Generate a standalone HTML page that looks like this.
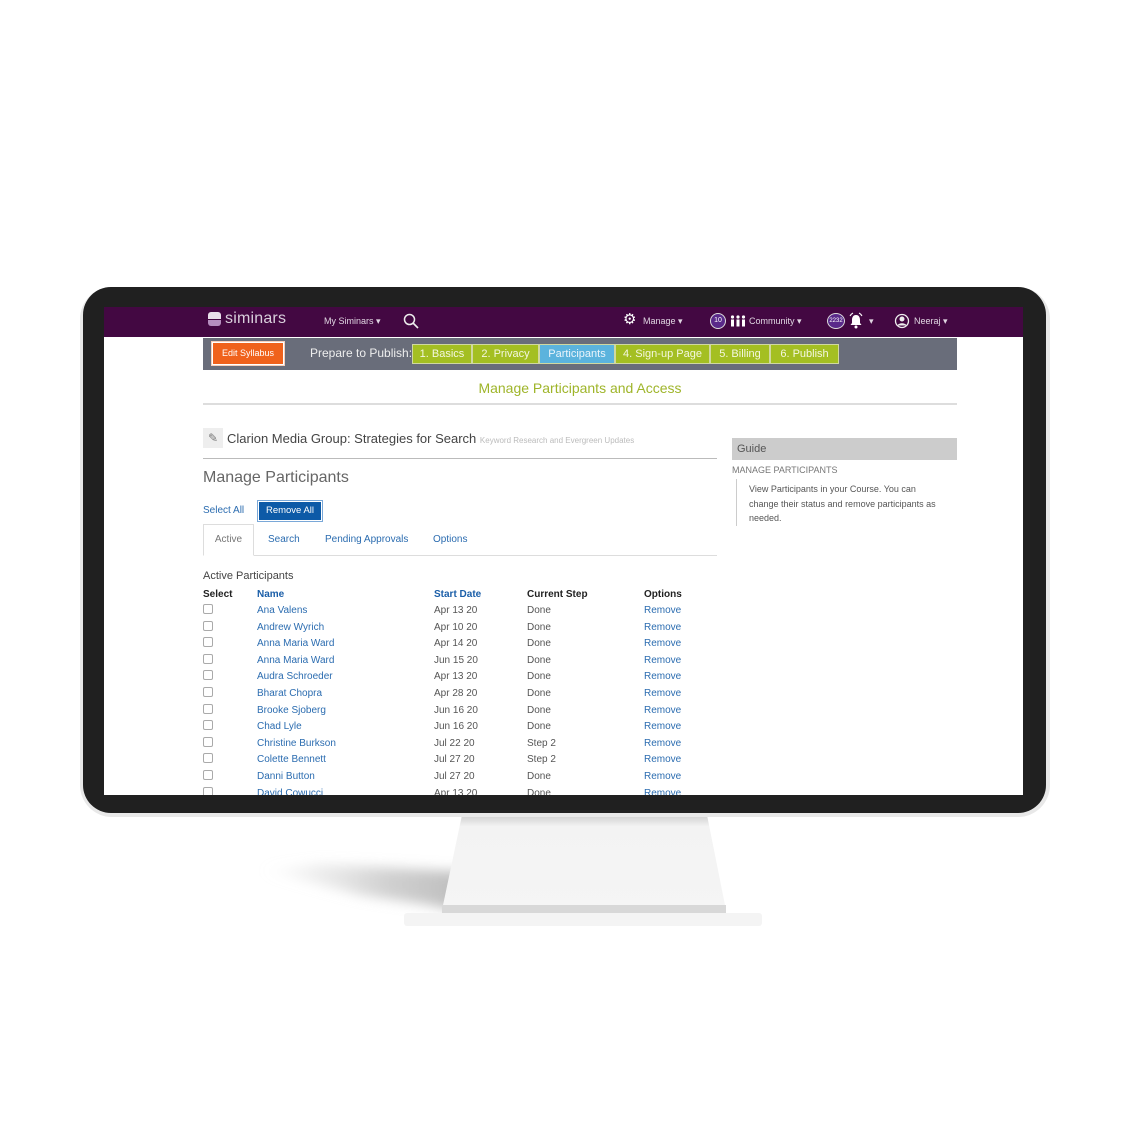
<!DOCTYPE html>
<html><head><meta charset="utf-8"><style>
*{margin:0;padding:0;box-sizing:border-box}
body{width:1123px;height:1122px;background:#fff;position:relative;overflow:hidden;font-family:"Liberation Sans",sans-serif;font-size:10px;color:#555}
.a{position:absolute;white-space:nowrap}
.bl{color:#2b6cb0}
.step{position:absolute;top:344px;height:20px;line-height:19px;color:#f4f7e0;font-size:11px;text-align:center;background:#a4bf22;border:1px solid #d0d8a0}
.cb{position:absolute;width:10px;height:10px;border:1px solid #aaa;border-radius:2px}
</style></head><body>
<!-- stand shadow -->
<svg class="a" style="left:0;top:0" width="1123" height="1122">
<defs>
<filter id="b" x="-50%" y="-50%" width="200%" height="200%"><feGaussianBlur stdDeviation="6"/></filter>
<linearGradient id="sg" x1="0" y1="0" x2="1" y2="0"><stop offset="0" stop-color="#ddd" stop-opacity="0"/><stop offset=".6" stop-color="#ccc" stop-opacity=".9"/><stop offset="1" stop-color="#bbb"/></linearGradient>
<linearGradient id="g" x1="0" y1="0" x2="0" y2="1"><stop offset="0" stop-color="#cfcfcf"/><stop offset=".12" stop-color="#f3f3f3"/><stop offset="1" stop-color="#f5f5f5"/></linearGradient>
</defs>
<polygon points="260,870 320,864 470,872 462,912 430,905 360,895" fill="url(#sg)" filter="url(#b)"/>
<polygon points="462,815 707,815 726,910 442,910" fill="url(#g)"/>
<rect x="442" y="905" width="284" height="8" fill="#d8d8d8"/>
<rect x="404" y="913" width="358" height="13" rx="3" fill="#f4f4f4"/>
</svg>
<!-- bezel -->
<div class="a" style="left:80px;top:287px;width:970px;height:530px;border-radius:32px;background:#e8e8e8"></div>
<div class="a" style="left:83px;top:287px;width:963px;height:526px;border-radius:28px;background:#202020"></div>
<div class="a" style="left:104px;top:307px;width:919px;height:488px;background:#fff;overflow:hidden">
 <div class="a" style="left:0;top:0;width:919px;height:30px;background:#430842"></div>
</div>
<!-- nav content -->
<div class="a" style="left:208px;top:312px;width:13px;height:7px;background:#e8e0ea;border-radius:3px 3px 0 0"></div>
<div class="a" style="left:208px;top:320px;width:13px;height:6px;background:#b58fbf;border-radius:0 0 3px 3px"></div>
<div class="a" style="left:225px;top:310px;font-size:16px;color:#d9cfdc;letter-spacing:.2px">siminars</div>
<div class="a" style="left:324px;top:316px;font-size:9px;color:#e0d6e2">My Siminars ▾</div>
<svg class="a" style="left:403px;top:313px" width="16" height="16"><circle cx="6.5" cy="6.5" r="5" stroke="#eee" stroke-width="1.5" fill="none"/><line x1="10" y1="10" x2="15" y2="15" stroke="#eee" stroke-width="1.6"/></svg>
<div class="a" style="left:623px;top:312px;font-size:15px;color:#fff;line-height:16px">⚙</div>
<div class="a" style="left:643px;top:316px;font-size:9px;color:#e0d6e2">Manage ▾</div>
<div class="a" style="left:710px;top:313px;width:16px;height:16px;border-radius:50%;border:1px solid #ddd;background:#5a2a8a;color:#fff;font-size:7px;text-align:center;line-height:14px">10</div>
<svg class="a" style="left:730px;top:315px" width="16" height="12"><g fill="#fff"><circle cx="2.5" cy="2" r="1.6"/><circle cx="8" cy="2" r="1.6"/><circle cx="13.5" cy="2" r="1.6"/><rect x="1" y="4.5" width="3" height="7"/><rect x="6.5" y="4.5" width="3" height="7"/><rect x="12" y="4.5" width="3" height="7"/></g></svg>
<div class="a" style="left:749px;top:316px;font-size:9px;color:#e0d6e2">Community ▾</div>
<div class="a" style="left:827px;top:313px;width:18px;height:16px;border-radius:50%;border:1px solid #ddd;background:#5a2a8a;color:#fff;font-size:6px;text-align:center;line-height:14px">2232</div>
<svg class="a" style="left:848px;top:312px" width="16" height="17"><path d="M8 3c-3 0-4 2.5-4 5v3l-1.5 2h11L12 11V8c0-2.5-1-5-4-5z" fill="#fff"/><circle cx="8" cy="15" r="1.5" fill="#fff"/><path d="M2 4a7 7 0 0 1 3-3M14 4a7 7 0 0 0-3-3" stroke="#fff" fill="none"/></svg>
<div class="a" style="left:869px;top:316px;font-size:9px;color:#e0d6e2">▾</div>
<svg class="a" style="left:894px;top:313px" width="16" height="16"><circle cx="8" cy="8" r="6.5" stroke="#eee" stroke-width="1.3" fill="none"/><circle cx="8" cy="6" r="2.5" fill="#eee"/><path d="M3.5 12.5c1-3 8-3 9 0" fill="#eee"/></svg>
<div class="a" style="left:914px;top:316px;font-size:9px;color:#e0d6e2">Neeraj ▾</div>
<!-- grey bar -->
<div class="a" style="left:203px;top:338px;width:754px;height:32px;background:#696d7a"></div>
<div class="a" style="left:211px;top:341px;width:74px;height:25px;border:1px solid #f5d0bc;background:#fff;padding:1px"><div style="background:#f0621c;color:#fff;font-size:9px;text-align:center;line-height:21px">Edit Syllabus</div></div>
<div class="a" style="left:310px;top:346px;font-size:12px;color:#eee">Prepare to Publish:</div>
<div class="step" style="left:412px;width:60px">1. Basics</div>
<div class="step" style="left:472px;width:67px">2. Privacy</div>
<div class="step" style="left:539px;width:76px;background:#5bb3dd;color:#eaf4fb">Participants</div>
<div class="step" style="left:615px;width:95px">4. Sign-up Page</div>
<div class="step" style="left:710px;width:60px">5. Billing</div>
<div class="step" style="left:770px;width:69px">6. Publish</div>
<div class="a" style="left:203px;top:380px;width:754px;text-align:center;font-size:14px;color:#9fb52a">Manage Participants and Access</div>
<div class="a" style="left:203px;top:403px;width:754px;height:2px;background:#ddd"></div>
<!-- course title -->
<div class="a" style="left:203px;top:428px;width:20px;height:20px;background:#eee;color:#777;font-size:12px;text-align:center;line-height:20px">✎</div>
<div class="a" style="left:227px;top:431px;font-size:13px;color:#444">Clarion Media Group: Strategies for Search <span style="font-size:8px;color:#bbb">Keyword Research and Evergreen Updates</span></div>
<div class="a" style="left:203px;top:458px;width:514px;height:1px;background:#bbb"></div>
<div class="a" style="left:203px;top:469px;font-size:16px;color:#666">Manage Participants</div>
<div class="a bl" style="left:203px;top:505px">Select All</div>
<div class="a" style="left:257px;top:500px;width:66px;height:22px;border:1px solid #7aa8d8;padding:1px"><div style="background:#0d5aa7;color:#fff;font-size:9.5px;text-align:center;line-height:18px">Remove All</div></div>
<!-- tabs -->
<div class="a" style="left:203px;top:555px;width:514px;height:1px;background:#ddd"></div>
<div class="a" style="left:203px;top:524px;width:51px;height:32px;border:1px solid #ddd;border-bottom:1px solid #fff;background:#fff;text-align:center;line-height:30px;color:#777">Active</div>
<div class="a bl" style="left:268px;top:534px">Search</div>
<div class="a bl" style="left:325px;top:534px">Pending Approvals</div>
<div class="a bl" style="left:433px;top:534px">Options</div>
<div class="a" style="left:203px;top:570px;font-size:11px;color:#444">Active Participants</div>
<div class="a" style="left:203px;top:589px;font-weight:bold;color:#222">Select</div>
<div class="a" style="left:257px;top:589px;font-weight:bold;color:#1a5ea8">Name</div>
<div class="a" style="left:434px;top:589px;font-weight:bold;color:#1a5ea8">Start Date</div>
<div class="a" style="left:527px;top:589px;font-weight:bold;color:#222">Current Step</div>
<div class="a" style="left:644px;top:589px;font-weight:bold;color:#222">Options</div>
<div class="a" style="left:200px;top:600px;width:600px;height:195px;overflow:hidden">
<div class="cb" style="left:3px;top:4px"></div><div class="a bl" style="left:57px;top:5px">Ana Valens</div><div class="a" style="left:234px;top:5px">Apr 13 20</div><div class="a" style="left:327px;top:5px">Done</div><div class="a bl" style="left:444px;top:5px">Remove</div>
<div class="cb" style="left:3px;top:20.6px"></div><div class="a bl" style="left:57px;top:21.6px">Andrew Wyrich</div><div class="a" style="left:234px;top:21.6px">Apr 10 20</div><div class="a" style="left:327px;top:21.6px">Done</div><div class="a bl" style="left:444px;top:21.6px">Remove</div>
<div class="cb" style="left:3px;top:37.2px"></div><div class="a bl" style="left:57px;top:38.2px">Anna Maria Ward</div><div class="a" style="left:234px;top:38.2px">Apr 14 20</div><div class="a" style="left:327px;top:38.2px">Done</div><div class="a bl" style="left:444px;top:38.2px">Remove</div>
<div class="cb" style="left:3px;top:53.8px"></div><div class="a bl" style="left:57px;top:54.8px">Anna Maria Ward</div><div class="a" style="left:234px;top:54.8px">Jun 15 20</div><div class="a" style="left:327px;top:54.8px">Done</div><div class="a bl" style="left:444px;top:54.8px">Remove</div>
<div class="cb" style="left:3px;top:70.4px"></div><div class="a bl" style="left:57px;top:71.4px">Audra Schroeder</div><div class="a" style="left:234px;top:71.4px">Apr 13 20</div><div class="a" style="left:327px;top:71.4px">Done</div><div class="a bl" style="left:444px;top:71.4px">Remove</div>
<div class="cb" style="left:3px;top:87px"></div><div class="a bl" style="left:57px;top:88px">Bharat Chopra</div><div class="a" style="left:234px;top:88px">Apr 28 20</div><div class="a" style="left:327px;top:88px">Done</div><div class="a bl" style="left:444px;top:88px">Remove</div>
<div class="cb" style="left:3px;top:103.6px"></div><div class="a bl" style="left:57px;top:104.6px">Brooke Sjoberg</div><div class="a" style="left:234px;top:104.6px">Jun 16 20</div><div class="a" style="left:327px;top:104.6px">Done</div><div class="a bl" style="left:444px;top:104.6px">Remove</div>
<div class="cb" style="left:3px;top:120.2px"></div><div class="a bl" style="left:57px;top:121.2px">Chad Lyle</div><div class="a" style="left:234px;top:121.2px">Jun 16 20</div><div class="a" style="left:327px;top:121.2px">Done</div><div class="a bl" style="left:444px;top:121.2px">Remove</div>
<div class="cb" style="left:3px;top:136.8px"></div><div class="a bl" style="left:57px;top:137.8px">Christine Burkson</div><div class="a" style="left:234px;top:137.8px">Jul 22 20</div><div class="a" style="left:327px;top:137.8px">Step 2</div><div class="a bl" style="left:444px;top:137.8px">Remove</div>
<div class="cb" style="left:3px;top:153.4px"></div><div class="a bl" style="left:57px;top:154.4px">Colette Bennett</div><div class="a" style="left:234px;top:154.4px">Jul 27 20</div><div class="a" style="left:327px;top:154.4px">Step 2</div><div class="a bl" style="left:444px;top:154.4px">Remove</div>
<div class="cb" style="left:3px;top:170px"></div><div class="a bl" style="left:57px;top:171px">Danni Button</div><div class="a" style="left:234px;top:171px">Jul 27 20</div><div class="a" style="left:327px;top:171px">Done</div><div class="a bl" style="left:444px;top:171px">Remove</div>
<div class="cb" style="left:3px;top:186.6px"></div><div class="a bl" style="left:57px;top:187.6px">David Cowucci</div><div class="a" style="left:234px;top:187.6px">Apr 13 20</div><div class="a" style="left:327px;top:187.6px">Done</div><div class="a bl" style="left:444px;top:187.6px">Remove</div>
</div>
<!-- guide -->
<div class="a" style="left:732px;top:438px;width:225px;height:22px;background:#ccc;color:#555;font-size:11px;line-height:22px;padding-left:5px">Guide</div>
<div class="a" style="left:732px;top:465px;font-size:9px;color:#777">MANAGE PARTICIPANTS</div>
<div class="a" style="left:736px;top:479px;width:1px;height:47px;background:#ccc"></div>
<div class="a" style="left:749px;top:482px;font-size:9px;color:#555;line-height:14.5px">View Participants in your Course. You can<br>change their status and remove participants as<br>needed.</div>
</body></html>
